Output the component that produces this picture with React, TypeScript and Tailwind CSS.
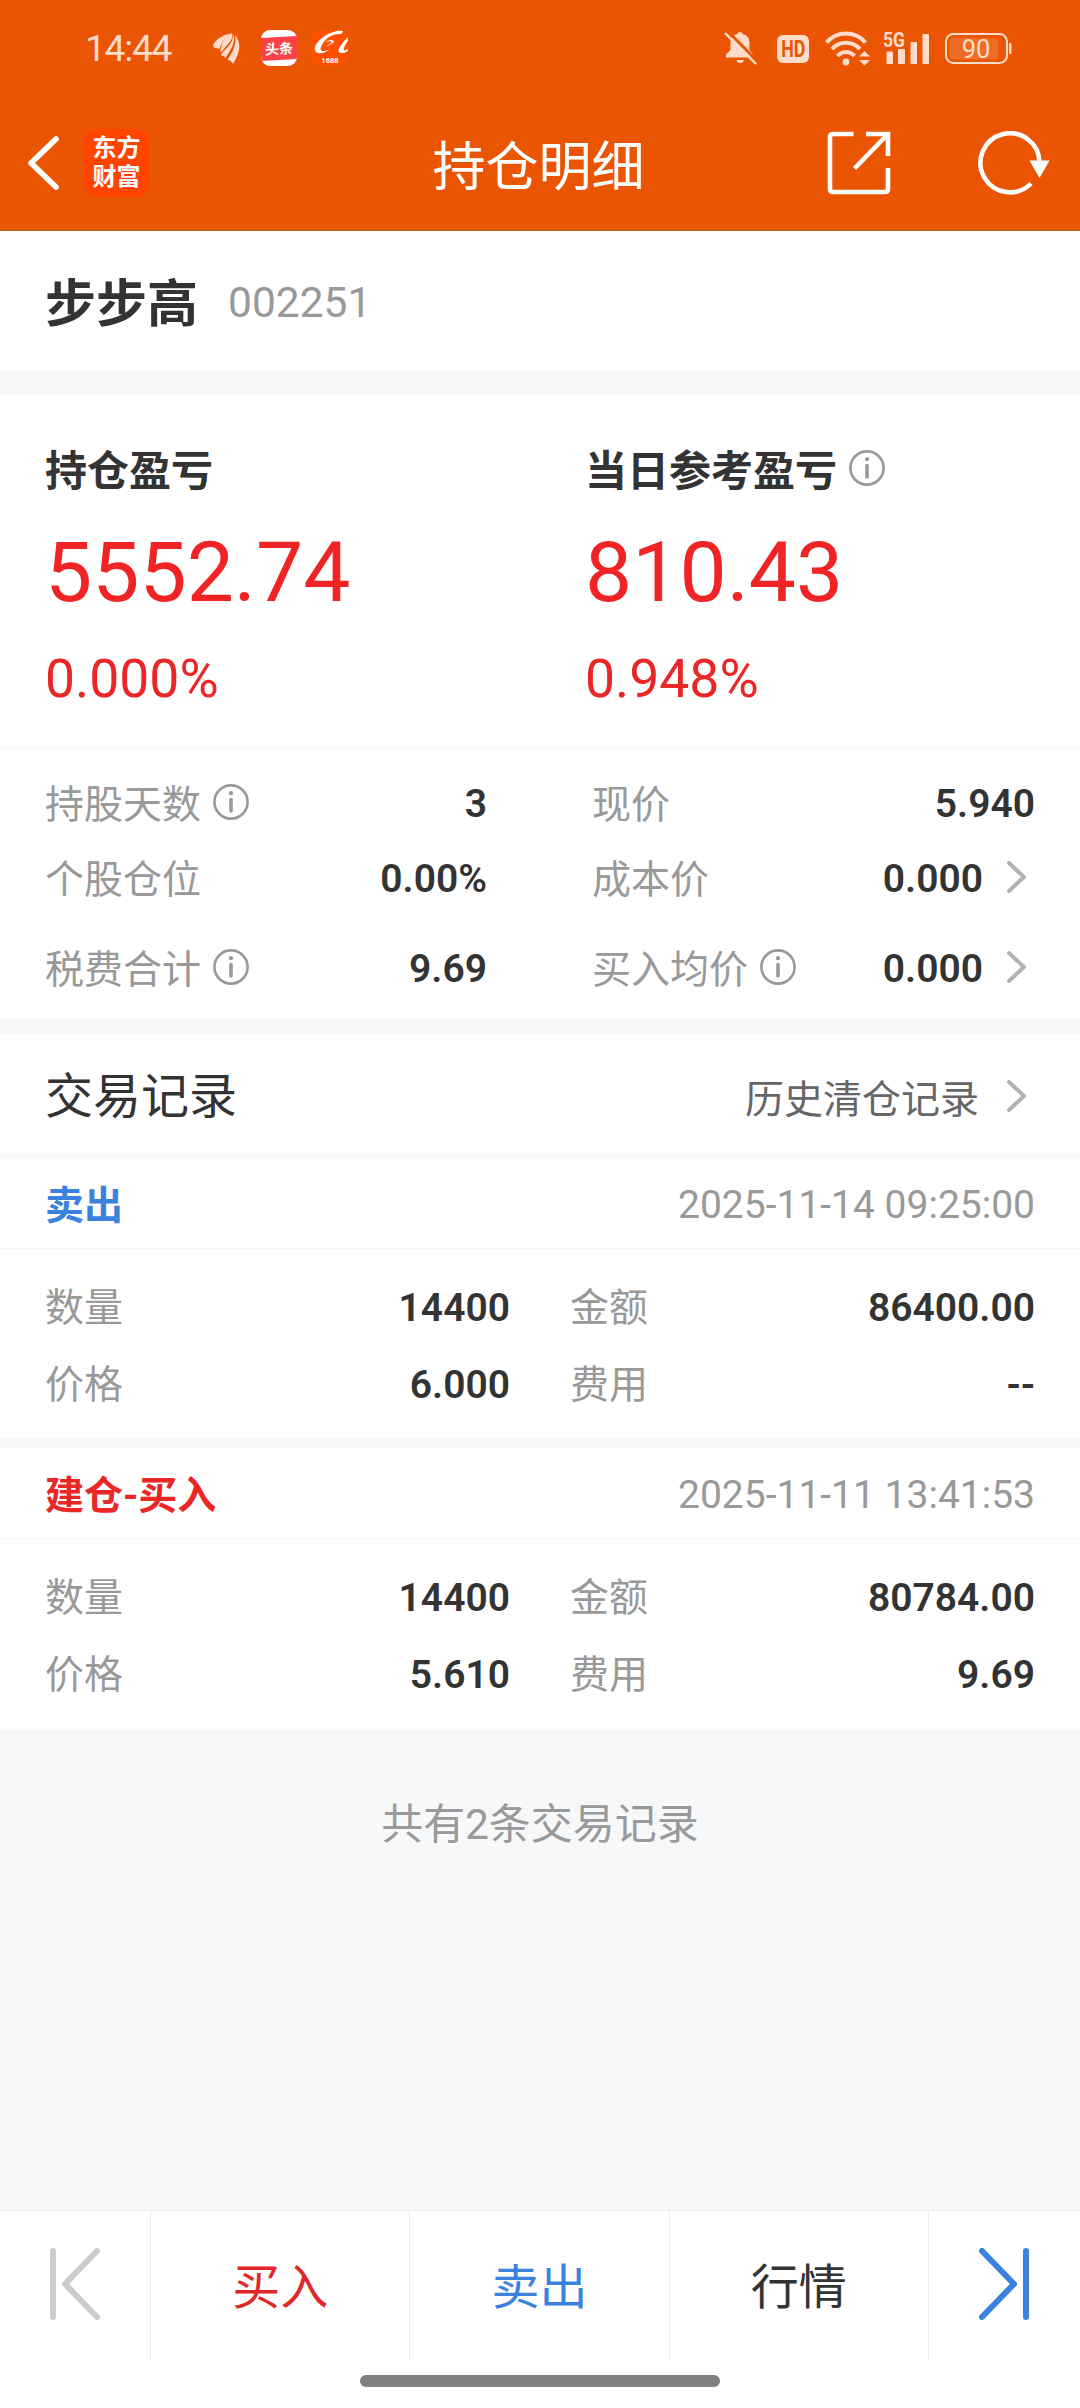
import React from "react";

type Cell = { label: string; value: string; info?: boolean; arrow?: boolean };

const stats: { left: Cell; right: Cell; height: string }[] = [
  {
    left: { label: "持股天数", value: "3", info: true },
    right: { label: "现价", value: "5.940" },
    height: "h-[75px]",
  },
  {
    left: { label: "个股仓位", value: "0.00%" },
    right: { label: "成本价", value: "0.000", arrow: true },
    height: "h-[75px]",
  },
  {
    left: { label: "税费合计", value: "9.69", info: true },
    right: { label: "买入均价", value: "0.000", info: true, arrow: true },
    height: "h-[105px]",
  },
];

const records = [
  {
    type: "卖出",
    color: "text-[#3a82de]",
    time: "2025-11-14 09:25:00",
    count: "14400",
    amount: "86400.00",
    price: "6.000",
    fee: "--",
  },
  {
    type: "建仓-买入",
    color: "text-[#ea2626]",
    time: "2025-11-11 13:41:53",
    count: "14400",
    amount: "80784.00",
    price: "5.610",
    fee: "9.69",
  },
];

const InfoIcon = () => (
  <svg className="w-9 h-9 shrink-0" viewBox="0 0 36 36" fill="none">
    <circle cx="18" cy="18" r="16.6" stroke="#999" strokeWidth="2.6" />
    <circle cx="18" cy="9.2" r="2.1" fill="#999" />
    <path d="M18 15.5V27" stroke="#999" strokeWidth="3.6" strokeLinecap="round" />
  </svg>
);

const ArrowIcon = () => (
  <svg className="w-5 h-8 shrink-0" viewBox="0 0 20 32" fill="none">
    <path d="M2 2L17 16L2 30" stroke="#b2b2b2" strokeWidth="4" strokeLinecap="round" strokeLinejoin="round" />
  </svg>
);

const StatusBar = () => (
  <div className="h-[96px] flex items-center text-[#ffdcca]">
    <span className="ml-[85px] w-[128px] pt-[2px] text-[37px] leading-9 tracking-[-1.2px]">14:44</span>
    <svg className="w-[27px] h-[31px]" viewBox="0 0 27 31" fill="currentColor">
      <path d="M0 12C3 6 10 2 18 0.500C12 5 9 9 6.500 15.500C4 15 1 16.500 0 12Z" />
      <path d="M19 0C21 6 15 11 11.500 15L7.500 20C7.500 10 12 4 19 0Z" />
      <path d="M20 1C23.500 9 18 16 12.500 25C11 23 9.500 22.500 8 22.500C9.500 17 21 12 20 1Z" />
      <path d="M22 2C28 9 28 18 20 31C19 29 17 27 14.500 26.500C20 19 24 11 22 2Z" />
    </svg>
    <div className="ml-[21px] w-9 h-9 rounded-[9px] overflow-hidden bg-white flex items-center">
      <div className="w-9 h-[23px] bg-[#fb4146] flex items-center justify-center text-white text-[14px] leading-none font-bold whitespace-nowrap -skew-y-3">
        头条
      </div>
    </div>
    <svg className="ml-[15px] w-9 h-9 rounded-[9px] bg-[#ff5000]" viewBox="0 0 36 36">
      <path
        d="M31 1C22-1 6 8 3 17C1 25 11 25 18 19C12 22 7 22 9 17C12 9 20 3 29 4C30 3 31 2 31 1Z"
        fill="#fff"
      />
      <path d="M14 12C18 9 22 10 22 12C20 14 17 15 14 17C17 14 20 13 20 12C19 11 17 11 14 12Z" fill="#fff" />
      <path d="M36 7C31 12 25 19 27 22C29 24 33 23 36 21V19C33 21 31 21 32 18C33 15 35 12 36 11Z" fill="#fff" />
      <text x="18" y="33" textAnchor="middle" fontSize="7.6" fontWeight="700" fill="#fff">
        1688
      </text>
    </svg>

    <svg className="ml-auto w-[33px] h-[34px]" viewBox="0 0 33 34">
      <g fill="currentColor">
        <path d="M13.5 3Q13.5 1 16 1Q18.500 1 18.500 3C23 4 25.500 7 25.500 12V19L29 23.500V26.500H2V23.500L6.500 19V12C6.500 7 9 4 13.500 3Z" />
        <path d="M12.500 29H20C19.500 33 13 33 12.500 29Z" />
      </g>
      <path d="M3.500 0L35 32" stroke="#ea5504" strokeWidth="3" />
      <path d="M1 2L32 33" stroke="currentColor" strokeWidth="2.400" />
    </svg>
    <div className="ml-[20px] mt-[2px] w-8 h-7 rounded-[6px] bg-[#ffdcca] text-[#ea5504] flex items-center justify-center text-[21px] leading-none font-bold">
      <span className="scale-x-85 scale-y-110">HD</span>
    </div>
    <svg className="ml-[16px] w-[45px] h-[35px]" viewBox="0 0 45 35">
      <g fill="none" stroke="currentColor" strokeWidth="4">
        <path d="M1.500 11.500C12-0.500 30-0.500 40.500 11.500" />
        <path d="M7 18C14.500 9.500 27.500 9.500 35 18" />
        <path d="M12.500 25C17.500 19.500 24.500 19.500 29.500 25" />
      </g>
      <circle cx="21" cy="31" r="3.400" fill="currentColor" />
      <path d="M34 25.500L39.500 20L45 25.500ZM34 29L39.500 34.500L45 29Z" fill="currentColor" />
    </svg>
    <svg className="ml-[12px] w-[48px] h-[50px]" viewBox="-1 -8 48 50" fill="currentColor">
      <text x="0" y="15.500" fontSize="21" fontWeight="700" textLength="22" lengthAdjust="spacingAndGlyphs">
        5G
      </text>
      <rect x="3.500" y="20.500" width="6.500" height="12.500" rx="1" />
      <rect x="15" y="18" width="7" height="15" rx="1" />
      <rect x="27.500" y="11" width="6.500" height="22" rx="1" />
      <rect x="39.500" y="3" width="6.500" height="30" rx="1" />
    </svg>
    <svg className="ml-[15px] mr-[68px] w-[67px] h-[31px]" viewBox="0 0 67 31">
      <rect x="1" y="1" width="61" height="29" rx="7.500" fill="none" stroke="currentColor" strokeWidth="2" />
      <rect x="4.500" y="5" width="49" height="21.500" rx="4" fill="#ee6d25" />
      <rect x="64" y="10" width="2.500" height="11" rx="1" fill="currentColor" />
      <text x="31" y="24.500" textAnchor="middle" fontSize="25.500" fill="currentColor">
        90
      </text>
    </svg>
  </div>
);

const NavBar = () => (
  <div className="h-[134px] grid grid-cols-3 items-center text-white">
    <div className="flex items-center">
      <svg className="ml-[27px] w-8 h-[54px]" viewBox="0 0 32 54" fill="none">
        <path d="M29 3L4 27L29 51" stroke="#fff" strokeWidth="5.600" strokeLinecap="round" strokeLinejoin="round" />
      </svg>
      <div className="ml-[24px] w-[67px] h-[68px] rounded-[14px] bg-[#ff4400] flex flex-col items-center justify-center text-[24px] leading-[29px] font-bold">
        <span>东方</span>
        <span>财富</span>
      </div>
    </div>
    <div className="pt-[10px] pr-[3px] text-center text-[53px] leading-[60px]">持仓明细</div>
    <div className="flex items-center justify-end">
      <svg className="w-16 h-16" viewBox="0 0 64 64" fill="none" stroke="#fff" strokeWidth="4.600">
        <path d="M26.500 3H6Q3 3 3 6V58Q3 61 6 61H58Q61 61 61 58V37" />
        <path d="M39 3H61V25" />
        <path d="M60 4L27.500 37.500" />
      </svg>
      <svg className="ml-[87px] mr-[30px] w-[72px] h-16" viewBox="0 0 72 64" fill="none">
        <path d="M61.500 32A29.500 29.500 0 1 0 53 52.500" stroke="#fff" strokeWidth="4.600" />
        <path d="M51.500 29.500H71.500L61.500 47Z" fill="#fff" />
      </svg>
    </div>
  </div>
);

const StatCell = ({ cell }: { cell: Cell }) => (
  <div className="flex items-center w-full">
    <span className="pt-[2px] text-[#999]">{cell.label}</span>
    {cell.info && (
      <span className="ml-3 -mt-1">
        <InfoIcon />
      </span>
    )}
    <span className="ml-auto font-semibold text-[#333]">{cell.value}</span>
    {cell.arrow && (
      <span className="ml-[24px] mr-[8px] -mt-1">
        <ArrowIcon />
      </span>
    )}
  </div>
);

const Field = ({ label, value }: { label: string; value: string }) => (
  <div className="flex items-center justify-between">
    <span className="text-[#999]">{label}</span>
    <span className="font-semibold text-[#333]">{value}</span>
  </div>
);

const App = () => {
  return (
    <div className="w-[1080px] h-[2408px] flex flex-col overflow-hidden bg-[#f6f8fa] text-[39px] leading-[46px] text-[#333] font-['Roboto','Noto_Sans_CJK_SC',sans-serif]">
      <div className="h-[231px] shrink-0 bg-[#ea5504] border-b border-[#b9632f]">
        <StatusBar />
        <NavBar />
      </div>

      <div className="h-[140px] shrink-0 bg-white px-[45px] flex items-center">
        <span className="pt-[8px] text-[51px] leading-[60px] font-bold">步步高</span>
        <span className="ml-[30px] pt-[3px] text-[42.500px] text-[#999]">002251</span>
      </div>

      <div className="mt-6 h-[353px] shrink-0 bg-white grid grid-cols-2 px-[45px] text-[#ea2626]">
        <div className="pt-[52px]">
          <div className="text-[42px] leading-[50px] font-bold text-[#333]">持仓盈亏</div>
          <div className="mt-[26px] text-[84px] leading-[100px] text-[#f02424]">5552.74</div>
          <div className="mt-[26px] text-[53.500px] leading-[60px]">0.000%</div>
        </div>
        <div className="pt-[52px] pl-[45px]">
          <div className="flex items-center text-[42px] leading-[50px] font-bold text-[#333]">
            当日参考盈亏
            <span className="ml-3 -mt-2">
              <InfoIcon />
            </span>
          </div>
          <div className="mt-[26px] text-[84px] leading-[100px] text-[#f02424]">810.43</div>
          <div className="mt-[26px] text-[53.500px] leading-[60px]">0.948%</div>
        </div>
      </div>

      <div className="h-[271px] shrink-0 bg-white border-t border-[#f3f4f6] px-[45px] pt-[17px]">
        {stats.map((row, index) => (
          <div key={index} className={`flex gap-[105px] ${row.height}`}>
            <div className="w-[442px] flex">
              <StatCell cell={row.left} />
            </div>
            <div className="flex-1 flex">
              <StatCell cell={row.right} />
            </div>
          </div>
        ))}
      </div>

      <div className="mt-[15px] h-[120px] shrink-0 bg-white px-[45px] flex items-center">
        <span className="pt-[6px] text-[48px] leading-[60px]">交易记录</span>
        <span className="ml-auto pt-[11px] text-[#666]">历史清仓记录</span>
        <span className="ml-[28px] mr-[8px] mt-1">
          <ArrowIcon />
        </span>
      </div>

      <div className="mt-1 shrink-0 flex flex-col gap-[9px]">
        {records.map((r) => (
          <div key={r.time} className="h-[281px] bg-white">
            <div className="h-[91px] px-[45px] flex items-center justify-between border-b border-[#f5f6f7]">
              <span className={`pt-[5px] font-bold ${r.color}`}>{r.type}</span>
              <span className="pt-[3px] text-[#999]">{r.time}</span>
            </div>
            <div className="px-[45px] pt-[36px] grid grid-cols-[465px_465px] gap-x-[60px] gap-y-[31px]">
              <Field label="数量" value={r.count} />
              <Field label="金额" value={r.amount} />
              <Field label="价格" value={r.price} />
              <Field label="费用" value={r.fee} />
            </div>
          </div>
        ))}
      </div>

      <div className="mt-[71px] text-center text-[42px] leading-[50px] text-[#999]">共有2条交易记录</div>

      <div className="mt-auto h-[198px] shrink-0 bg-white border-t border-[#e9ebee]">
        <div className="h-[149px] flex text-[48px] text-center divide-x divide-[#e9ebee]">
          <div className="w-[151px] flex items-center justify-center">
            <svg className="-mt-1 w-[50px] h-[72px]" viewBox="0 0 50 72" fill="none" stroke="#ccc" strokeWidth="6" strokeLinecap="round" strokeLinejoin="round">
              <path d="M3 3V69M47 3L15 36L47 69" />
            </svg>
          </div>
          <div className="flex-1 flex items-center justify-center pt-[5px] text-[#e02828]">买入</div>
          <div className="flex-1 flex items-center justify-center pt-[5px] text-[#3a82de]">卖出</div>
          <div className="flex-1 flex items-center justify-center pt-[5px]">行情</div>
          <div className="w-[151px] flex items-center justify-center">
            <svg className="-mt-1 w-[50px] h-[72px]" viewBox="0 0 50 72" fill="none" stroke="#3a82de" strokeWidth="6" strokeLinecap="round" strokeLinejoin="round">
              <path d="M47 3V69M3 3L35 36L3 69" />
            </svg>
          </div>
        </div>
        <div className="mt-[15px] mx-auto w-[360px] h-3 rounded-full bg-[#808080]" />
      </div>
    </div>
  );
};

export default App;
